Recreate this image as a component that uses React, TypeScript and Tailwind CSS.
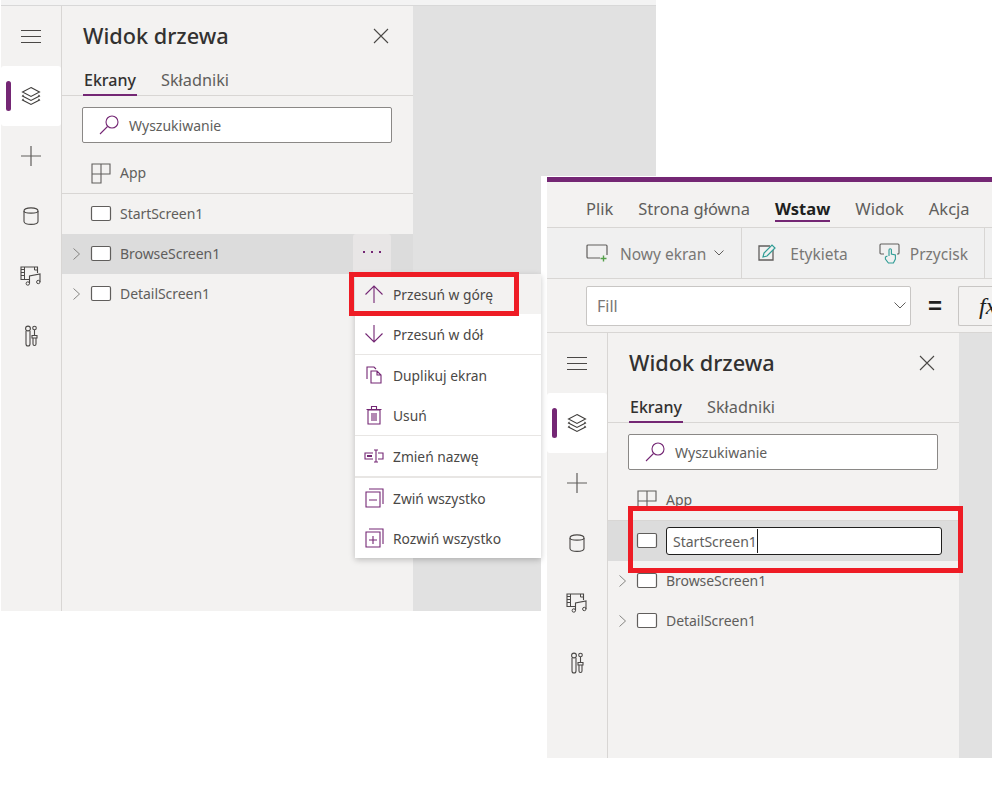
import type { ReactNode } from "react";

const purple = "#742774";

function Icon({ size = 20, children, className = "" }: { size?: number; children: ReactNode; className?: string }) {
  return (
    <svg width={size} height={size} viewBox={`0 0 ${size} ${size}`} fill="none" className={`shrink-0 ${className}`}>
      {children}
    </svg>
  );
}

function Hamburger() {
  return (
    <Icon size={22}>
      <path d="M1 5.500h20M1 11.500h20M1 17.500h20" stroke="#4a4846" strokeWidth="1" />
    </Icon>
  );
}

function Layers() {
  return (
    <Icon size={22}>
      <path d="M11 2.500l8.500 4.500-8.500 4.500-8.500-4.500z" stroke="#3f3d3b" strokeWidth="1.100" />
      <path d="M3.500 10L2.500 11l8.500 4.500 8.500-4.500-1-1" stroke="#3f3d3b" strokeWidth="1.100" />
      <path d="M3.500 14L2.500 15l8.500 4.500 8.500-4.500-1-1" stroke="#3f3d3b" strokeWidth="1.100" />
    </Icon>
  );
}

function Plus() {
  return (
    <Icon size={22}>
      <path d="M1 11h20M11 1v20" stroke="#605e5c" strokeWidth="1.200" />
    </Icon>
  );
}

function Cylinder() {
  return (
    <Icon size={18}>
      <path d="M2 4c0-4.200 14-4.200 14 0v10.500c0 3.800-14 3.800-14 0z" stroke="#4a4846" strokeWidth="1.100" />
      <path d="M2 4c0 2.800 14 2.800 14 0" stroke="#4a4846" strokeWidth="1.100" />
    </Icon>
  );
}

function Media() {
  return (
    <Icon size={22}>
      <path d="M9 14.500H1V2h16.500v6" stroke="#4a4846" strokeWidth="1.100" />
      <path d="M1 4.500h3M1 7.500h3M1 10.500h3M4.500 2v12.500M14.500 2v3h3" stroke="#4a4846" strokeWidth="1" />
      <path d="M9.500 18.500V11l10.500-2v8" stroke="#4a4846" strokeWidth="1.100" />
      <circle cx="7.800" cy="18.500" r="1.700" stroke="#4a4846" />
      <circle cx="18.300" cy="17" r="1.700" stroke="#4a4846" />
    </Icon>
  );
}

function Tools() {
  return (
    <Icon size={22}>
      <circle cx="8" cy="3.500" r="2.400" stroke="#4a4846" strokeWidth="1.100" />
      <path d="M6 6v13a2 2 0 0 0 4 0V6" stroke="#4a4846" strokeWidth="1.100" />
      <circle cx="14.500" cy="3" r="1.800" stroke="#4a4846" strokeWidth="1.100" />
      <path d="M14.500 5v5M12 10.500h5v2.500h-5zM13 13v6a1.500 1.500 0 0 0 3 0v-6" stroke="#4a4846" strokeWidth="1.100" />
    </Icon>
  );
}

function ScreenIcon() {
  return (
    <Icon size={22}>
      <rect x="1.500" y="3.500" width="19" height="14" rx="1.500" fill="#fff" stroke="#605e5c" strokeWidth="1.200" />
    </Icon>
  );
}

function AppIcon() {
  return (
    <Icon size={22}>
      <path d="M2 2h18v10h-9v9H2zM2 12h9M11 2v10" stroke="#605e5c" strokeWidth="1.100" />
    </Icon>
  );
}

function Chevron() {
  return (
    <Icon size={12}>
      <path d="M1.500 0.500l6 5.500-6 5.500" stroke="#7a7876" strokeWidth="0.900" />
    </Icon>
  );
}

function Rail() {
  return (
    <div className="flex w-[61px] shrink-0 flex-col border-r border-[#d8d6d4] bg-[#f3f2f1]">
      <div className="flex h-[60px] items-center justify-center"><Hamburger /></div>
      <div className="relative flex h-[60px] items-center justify-center rounded-[3px] bg-white">
        <div className="absolute left-[5px] top-[15px] h-[30px] w-[5px] rounded-full bg-[#742774]" />
        <Layers />
      </div>
      <div className="flex h-[60px] items-center justify-center"><Plus /></div>
      <div className="flex h-[60px] items-center justify-center"><Cylinder /></div>
      <div className="flex h-[60px] items-center justify-center"><Media /></div>
      <div className="flex h-[60px] items-center justify-center"><Tools /></div>
    </div>
  );
}

function Row({ label, icon, chevron, selected, editing, more }: {
  label: string;
  icon: ReactNode;
  chevron?: boolean;
  selected?: boolean;
  editing?: boolean;
  more?: boolean;
}) {
  return (
    <div className={`flex h-10 items-center ${selected ? "bg-[#dcdcdc]" : ""}`}>
      <div className="flex w-[28px] justify-end pr-[6px]">{chevron && <Chevron />}</div>
      <div className="mr-[8px]">{icon}</div>
      {editing ? (
        <div className="flex h-[28px] w-[276px] items-center rounded-[3px] border border-[#201f1e] bg-white pl-[6px] text-[14px] text-[#605e5c]">
          {label}
          <span className="h-[24px] w-px bg-[#201f1e]" />
        </div>
      ) : (
        <span className="pb-[2px] text-[14px] tracking-[-0.05px] text-[#605e5c]">{label}</span>
      )}
      {more && (
        <div className="ml-auto mr-[22px] flex h-10 w-[38px] items-center justify-center gap-[6px] rounded-[3px] bg-[#e8e6e6] pb-[4px]">
          <span className="size-[2px] bg-[#742774]" />
          <span className="size-[2px] bg-[#742774]" />
          <span className="size-[2px] bg-[#742774]" />
        </div>
      )}
    </div>
  );
}

function TreePanel({ editStart }: { editStart?: boolean }) {
  return (
    <div className="flex w-[351px] shrink-0 flex-col bg-[#f3f2f1] font-normal">
      <div className="flex h-[60px] items-center justify-between pl-[21px] pr-[24px]">
        <span className="text-[21.700px] font-medium text-[#323130]">Widok drzewa</span>
        <svg width="16" height="16" viewBox="0 0 16 16" fill="none">
          <path d="M1 1l14 14M15 1L1 15" stroke="#4a4846" strokeWidth="1.100" />
        </svg>
      </div>
      <div className="flex h-[30px] gap-[24px] border-b border-[#d8d6d4] pl-[21px]">
        <span className="h-[30px] border-b-2 border-[#742774] px-[1px] text-[16px] font-medium leading-[28px] text-[#323130]">Ekrany</span>
        <span className="text-[16.300px] leading-[28px] text-[#605e5c]">Składniki</span>
      </div>
      <div className="ml-[20px] mt-[11px] flex h-[36px] w-[310px] items-center gap-[9px] rounded-[2px] border border-[#8a8886] bg-white pl-[15px] text-[14px] text-[#605e5c]">
        <svg width="22" height="22" viewBox="0 0 22 22" fill="none">
          <circle cx="14" cy="8" r="6" stroke={purple} strokeWidth="1.100" />
          <path d="M9.500 12.500L2 20" stroke={purple} strokeWidth="1.100" />
        </svg>
        Wyszukiwanie
      </div>
      <div className="mt-[10px] border-b border-[#d8d6d4]">
        <Row label="App" icon={<AppIcon />} />
      </div>
      <Row label="StartScreen1" icon={<ScreenIcon />} selected={editStart} editing={editStart} />
      <Row label="BrowseScreen1" icon={<ScreenIcon />} chevron selected={!editStart} more={!editStart} />
      <Row label="DetailScreen1" icon={<ScreenIcon />} chevron />
    </div>
  );
}

function MenuItem({ label, icon, active, divider, thick }: {
  label: string;
  icon: ReactNode;
  active?: boolean;
  divider?: boolean;
  thick?: boolean;
}) {
  return (
    <div className={`flex items-center gap-[9px] pl-[9px] text-[13.800px] text-[#4a4846] ${active ? "bg-[#f3f2f1]" : ""} ${divider ? "h-[41px] border-b border-[#e8e6e4]" : thick ? "h-[42px] border-b-2 border-[#e8e6e4]" : "h-[40px]"}`}>
      {icon}
      <span className="pt-[2px]">{label}</span>
    </div>
  );
}

function ContextMenu() {
  const s = { stroke: purple, strokeWidth: 1.100 };
  return (
    <div className="absolute left-[355px] top-[274px] z-10 w-[186px] bg-white shadow-[0_2px_6px_rgba(0,0,0,0.22)]">
      <MenuItem label="Przesuń w górę" active icon={<Icon><path d="M10 19V2M1.500 10.500L10 2l8.500 8.500" {...s} /></Icon>} />
      <MenuItem label="Przesuń w dół" divider icon={<Icon><path d="M10 1v17M1.500 9.500L10 18l8.500-8.500" {...s} /></Icon>} />
      <MenuItem label="Duplikuj ekran" icon={<Icon><path d="M3 14V2h7l2 2" {...s} /><path d="M7 18V6h6l4 4v8zM13 6v4h4" {...s} /></Icon>} />
      <MenuItem label="Usuń" divider icon={<Icon><path d="M4 5h12v14H4zM2.500 4.500h15M7.500 4V1.500h5V4M8 8v8M10 8v8M12 8v8" {...s} /></Icon>} />
      <MenuItem label="Zmień nazwę" thick icon={<Icon><path d="M9 7H1v6h8M14 7h5v6h-5M10 4h4M10 16h4M12 4v12" {...s} /><path d="M3 10h5" stroke={purple} strokeWidth="2" /></Icon>} />
      <MenuItem label="Zwiń wszystko" icon={<Icon><path d="M2 4h14v15H2zM5 1h14v15M5 12h8" {...s} /></Icon>} />
      <MenuItem label="Rozwiń wszystko" icon={<Icon><path d="M2 4h14v15H2zM5 1h14v15M5 12h8M9 8v8" {...s} /></Icon>} />
    </div>
  );
}

function AppBar() {
  return (
    <div className="border-t-[5px] border-[#742774] bg-[#f3f2f1]">
      <div className="flex h-[46px] items-center gap-[25px] border-b border-[#d8d6d4] pl-[39px] pt-[9px] text-[16.500px] text-[#605e5c]">
        <span>Plik</span>
        <span>Strona główna</span>
        <span className="relative font-bold text-[#201f1e]">
          Wstaw
          <span className="absolute bottom-[-1px] left-0 h-[2px] w-full bg-[#742774]" />
        </span>
        <span>Widok</span>
        <span>Akcja</span>
      </div>
      <div className="flex h-[51px] items-center border-b border-[#d8d6d4] bg-[#f0f0f0] pl-[39px] text-[15.500px] text-[#797775]">
        <svg width="22" height="20" viewBox="0 0 22 20" fill="none">
          <path d="M14 15H2a1 1 0 0 1-1-1V3a1 1 0 0 1 1-1h18a1 1 0 0 1 1 1v9" stroke="#605e5c" strokeWidth="1.200" />
          <path d="M17.500 12.500v6M14.500 15.500h6" stroke="#54a04a" strokeWidth="1.400" />
        </svg>
        <span className="ml-[12px] pt-[3px]">Nowy ekran</span>
        <svg className="ml-[8px]" width="10" height="6" viewBox="0 0 10 6" fill="none">
          <path d="M0.500 0.500L5 5l4.500-4.500" stroke="#605e5c" />
        </svg>
        <div className="ml-[17px] h-full w-px bg-[#d8d6d4]" />
        <svg className="ml-[16px]" width="20" height="20" viewBox="0 0 20 20" fill="none">
          <path d="M15 7v10H1V3h11" stroke="#605e5c" strokeWidth="1.300" />
          <path d="M5 14l1-4 8-8 3 3-8 8z" stroke="#2f9c95" strokeWidth="1.200" />
        </svg>
        <span className="ml-[12px] pt-[3px]">Etykieta</span>
        <svg className="ml-[31px]" width="21" height="21" viewBox="0 0 21 21" fill="none">
          <path d="M5 11H2a1 1 0 0 1-1-1V2a1 1 0 0 1 1-1h17a1 1 0 0 1 1 1v8a1 1 0 0 1-1 1h-1" stroke="#605e5c" strokeWidth="1.100" />
          <path d="M10 13V7a1.200 1.200 0 0 1 2.400 0v4l4 1v4l-2 4h-5l-3-4v-2l2-1" stroke="#2f9c95" strokeWidth="1.100" />
        </svg>
        <span className="ml-[10px] pt-[3px]">Przycisk</span>
        <div className="ml-[16px] h-full w-px bg-[#d8d6d4]" />
      </div>
      <div className="flex h-[54px] items-center border-b border-[#d8d6d4] pl-[39px]">
        <div className="flex h-[40px] w-[325px] shrink-0 items-center justify-between rounded-[2px] border border-[#c8c6c4] bg-white pl-[10px] pr-[4px] text-[16px] text-[#797775]">
          Fill
          <svg width="12" height="7" viewBox="0 0 12 7" fill="none">
            <path d="M0.500 0.500L6 6l5.500-5.500" stroke="#605e5c" />
          </svg>
        </div>
        <span className="ml-[17px] w-[15px] shrink-0 font-['Liberation_Sans',sans-serif] text-[24px] font-bold leading-none text-[#201f1e]">=</span>
        <div className="ml-[15px] flex h-[40px] flex-1 items-center overflow-hidden rounded-l-[2px] border border-r-0 border-[#c8c6c4] pl-[20px] font-['Liberation_Serif',serif] text-[24px] italic text-[#201f1e]">
          <span>fx</span>
        </div>
      </div>
    </div>
  );
}

export default function App() {
  return (
    <div className="relative h-[796px] w-[992px] overflow-hidden bg-white font-['Noto_Sans',sans-serif]">
      {/* first screenshot */}
      <div className="absolute left-[1px] top-0 w-[655px]">
        <div className="h-[6px] border-b border-[#d8d8d8] bg-[#f3f3f3]" />
        <div className="flex h-[605px]">
          <Rail />
          <TreePanel />
          <div className="flex-1 bg-[#e1e1e1]" />
        </div>
      </div>
      <ContextMenu />
      <div className="absolute left-[349px] top-[272px] z-20 h-[44px] w-[170px] border-[5px] border-[#ee1c25]" />

      {/* second screenshot */}
      <div className="absolute left-[541px] top-[176px] flex h-[582px] w-[451px] flex-col border-t border-white bg-white pl-[6px]">
        <AppBar />
        <div className="flex min-h-0 flex-1">
          <Rail />
          <TreePanel editStart />
          <div className="flex-1 bg-[#e1e1e1]" />
        </div>
      </div>
      <div className="absolute left-[628px] top-[506px] z-20 h-[67px] w-[335px] border-[5px] border-[#ee1c25]" />
    </div>
  );
}
